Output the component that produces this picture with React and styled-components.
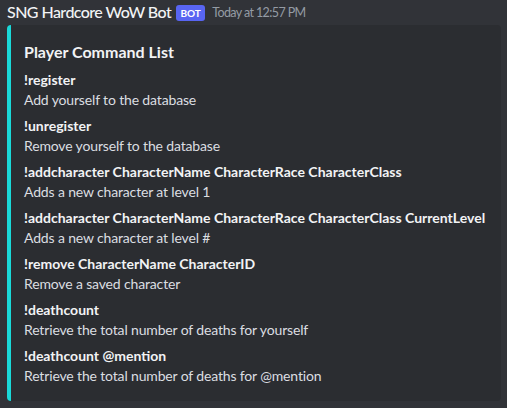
import React from "react";
import styled, { createGlobalStyle } from "styled-components";

const Global = createGlobalStyle`
  html, body { margin: 0; padding: 0; background: #313338; }
  body { font-family: Lato, "Noto Sans", sans-serif; -webkit-font-smoothing: antialiased; }
`;

const Message = styled.div`
  padding: 1px 6px 0 7px;
  width: 494px;
`;

const Header = styled.div`
  display: flex;
  align-items: center;
  height: 22px;
  line-height: 22px;
`;

const Username = styled.span`
  font-size: 16px;
  font-weight: 500;
  color: #f2f3f5;
  letter-spacing: -0.55px;
`;

const BotTag = styled.span`
  display: inline-flex;
  align-items: center;
  justify-content: center;
  height: 16px;
  width: 29px;
  margin-left: 5px;
  margin-top: 1px;
  border-radius: 3px;
  background: #5865f2;
  color: #fff;
  font-size: 10px;
  font-weight: 700;
  line-height: 16px;
`;

const Timestamp = styled.span`
  margin-left: 7px;
  font-size: 12.5px;
  letter-spacing: -0.6px;
  color: #949ba4;
  margin-top: 2px;
`;

const Embed = styled.div`
  margin-top: 2px;
  box-sizing: border-box;
  width: 494px;
  background: #2b2d31;
  border-left: 4px solid ${(p) => p.$accent};
  border-radius: 4px;
  padding: 8px 16px 16px 13px;
`;

const Title = styled.div`
  margin-top: 8px;
  font-size: 16px;
  line-height: 22px;
  font-weight: 700;
  color: #f2f3f5;
`;

const Fields = styled.div`
  margin-top: 8px;
  display: grid;
  row-gap: 8px;
`;

const Field = styled.div`
  display: flex;
  flex-direction: column;
  gap: 2px;
`;

const FieldName = styled.div`
  font-size: 14px;
  line-height: 18px;
  font-weight: 700;
  color: #f2f3f5;
  white-space: nowrap;
`;

const FieldValue = styled.div`
  font-size: 14px;
  line-height: 18px;
  letter-spacing: -0.15px;
  color: #dbdee1;
`;

const fields = [
  ["!register", "Add yourself to the database"],
  ["!unregister", "Remove yourself to the database"],
  ["!addcharacter CharacterName CharacterRace CharacterClass", "Adds a new character at level 1"],
  ["!addcharacter CharacterName CharacterRace CharacterClass CurrentLevel", "Adds a new character at level #"],
  ["!remove CharacterName CharacterID", "Remove a saved character"],
  ["!deathcount", "Retrieve the total number of deaths for yourself"],
  ["!deathcount @mention", "Retrieve the total number of deaths for @mention"],
];

export default function App() {
  return (
    <>
      <Global />
      <Message>
        <Header>
          <Username>SNG Hardcore WoW Bot</Username>
          <BotTag>BOT</BotTag>
          <Timestamp>Today at 12:57 PM</Timestamp>
        </Header>
        <Embed $accent="#1ad9d9">
          <Title>Player Command List</Title>
          <Fields>
            {fields.map(([n, v]) => (
              <Field key={n}>
                <FieldName>{n}</FieldName>
                <FieldValue>{v}</FieldValue>
              </Field>
            ))}
          </Fields>
        </Embed>
      </Message>
    </>
  );
}
